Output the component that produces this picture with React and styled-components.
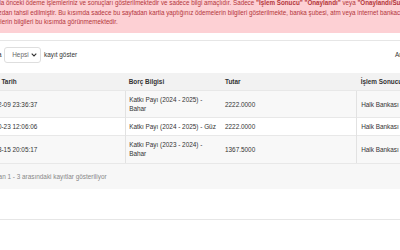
import React from "react";
import styled, { createGlobalStyle } from "styled-components";

const GlobalStyle = createGlobalStyle`
	html, body {
		margin: 0;
		padding: 0;
		background: #fff;
		overflow: hidden;
	}
	body {
		font-family: "Liberation Sans", Arial, sans-serif;
		font-size: 6.4px;
		color: #333;
	}
`;

const Page = styled.div`
	width: 519px;
	margin: -9px 0 0 -25.7px;
`;

const Alert = styled.div`
	background: #fdd0d4;
	color: #b3363a;
	font-size: 6.28px;
	padding: 7px 6.9px 6.5px;
	line-height: 9.5px;
	margin-bottom: 7px;
	white-space: nowrap;
`;

const AlertLine = styled.div``;

const Card = styled.section`
	border-top: 1px solid #e6e6e6;
	border-bottom: 1px solid #e6e6e6;
	padding-bottom: 30px;
`;

const Controls = styled.div`
	display: flex;
	justify-content: space-between;
	align-items: center;
	padding: 6px 3.7px 0;
	margin-bottom: 10.5px;
`;

const LengthLabel = styled.label`
	display: flex;
	align-items: center;
	gap: 2.8px;
`;

const Select = styled.div`
	display: inline-flex;
	align-items: center;
	justify-content: space-between;
	box-sizing: border-box;
	width: 37px;
	height: 15.5px;
	border: 1px solid #dedede;
	border-radius: 3px;
	padding: 0 3.5px 0 7px;
	color: #666;
`;

const Filter = styled.label`
	display: flex;
	align-items: center;
	gap: 3px;
`;

const SearchBox = styled.span`
	display: inline-block;
	box-sizing: border-box;
	width: 80px;
	height: 15.5px;
	border: 1px solid #dedede;
	border-radius: 3px;
`;

const Table = styled.table`
	width: 100%;
	border-collapse: collapse;
	table-layout: fixed;
`;

const Col = styled.col`
	width: ${({ $w }) => $w}px;
`;

const Th = styled.th`
	text-align: left;
	font-weight: bold;
	background: #f2f2f2;
	padding: 4px 3.7px;
	line-height: 9.3px;
	white-space: nowrap;
`;

const Row = styled.tr`
	background: ${({ $striped }) => ($striped ? "#f8f8f8" : "#fff")};
`;

const Td = styled.td`
	padding: 3.8px 3.7px;
	line-height: 9.3px;
	vertical-align: middle;
	border-top: 1px solid #e8e8e8;
	border-left: ${({ $divider }) => ($divider ? "1px solid #e2e2e2" : "none")};
	white-space: ${({ $wrap }) => ($wrap ? "normal" : "nowrap")};
`;

const Info = styled.div`
	background: #f7f7f7;
	color: #888;
	padding: 8px 3.7px;
	line-height: 9px;
	border-top: 1px solid #e8e8e8;
`;

const payments = [
	{
		date: "2025-02-09 23:36:37",
		debt: "Katkı Payı (2024 - 2025) - Bahar",
		amount: "2222.0000",
		result: "Halk Bankası - Onaylandı",
	},
	{
		date: "2024-10-23 12:06:06",
		debt: "Katkı Payı (2024 - 2025) - Güz",
		amount: "2222.0000",
		result: "Halk Bankası - Onaylandı",
	},
	{
		date: "2024-03-15 20:05:17",
		debt: "Katkı Payı (2023 - 2024) - Bahar",
		amount: "1367.5000",
		result: "Halk Bankası - Onaylandı",
	},
];

const Chevron = () => (
	<svg width="6" height="4" viewBox="0 0 6 4">
		<path d="M0.7 0.7 L3 3 L5.3 0.7" fill="none" stroke="#333" strokeWidth="1.1" />
	</svg>
);

const App = () => {
	return (
		<Page>
			<GlobalStyle />
			<Alert>
				<AlertLine>
					Sayfada önceki ödeme işlemleriniz ve sonuçları gösterilmektedir ve sadece bilgi amaçlıdır. Sadece{" "}
					<b>"İşlem Sonucu"</b> <b>"Onaylandı"</b> veya <b>"Onaylandı/Success"</b> olan ödemelerin ücreti
				</AlertLine>
				<AlertLine>
					kartınızdan tahsil edilmiştir. Bu kısımda sadece bu sayfadan kartla yaptığınız ödemelerin bilgileri
					gösterilmekte, banka şubesi, atm veya internet bankacılığı ile yapılan
				</AlertLine>
				<AlertLine>ödemelerin bilgileri bu kısımda görünmemektedir.</AlertLine>
			</Alert>

			<Card>
				<Controls>
					<LengthLabel>
						Sayfada
						<Select>
							Hepsi
							<Chevron />
						</Select>
						kayıt göster
					</LengthLabel>
					<Filter>
						Ara:
						<SearchBox />
					</Filter>
				</Controls>

				<Table>
					<colgroup>
						<Col $w={150.7} />
						<Col $w={96.3} />
						<Col $w={135.7} />
						<Col $w={136.3} />
					</colgroup>
					<thead>
						<tr>
							<Th>Ödeme Tarih</Th>
							<Th>Borç Bilgisi</Th>
							<Th>Tutar</Th>
							<Th>İşlem Sonucu</Th>
						</tr>
					</thead>
					<tbody>
						{payments.map((p, key) => (
							<Row key={`payment-${key}`} $striped={key % 2 === 0}>
								<Td>{p.date}</Td>
								<Td $divider $wrap>
									{p.debt}
								</Td>
								<Td>{p.amount}</Td>
								<Td $divider>{p.result}</Td>
							</Row>
						))}
					</tbody>
				</Table>

				<Info>3 kayıttan 1 - 3 arasındaki kayıtlar gösteriliyor</Info>
			</Card>
		</Page>
	);
};

export default App;
